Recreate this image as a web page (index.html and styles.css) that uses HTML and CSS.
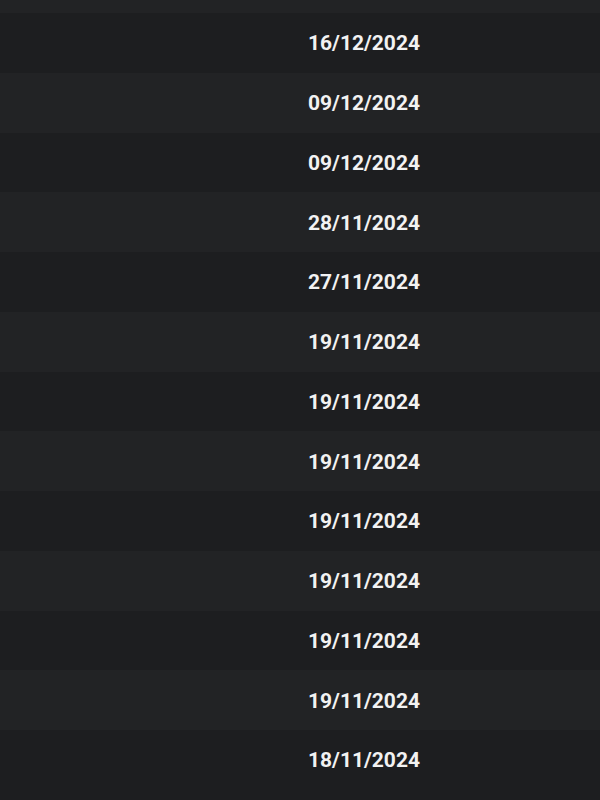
FILE: index.html
```html
<!DOCTYPE html>
<html>
<head>
<meta charset="utf-8">
<link rel="stylesheet" href="styles.css">
</head>
<body>
<div class="table">
  <div class="row light top"></div>
  <div class="row dark"><span class="date">16/12/2024</span></div>
  <div class="row light"><span class="date">09/12/2024</span></div>
  <div class="row dark"><span class="date">09/12/2024</span></div>
  <div class="row light"><span class="date">28/11/2024</span></div>
  <div class="row dark"><span class="date">27/11/2024</span></div>
  <div class="row light"><span class="date">19/11/2024</span></div>
  <div class="row dark"><span class="date">19/11/2024</span></div>
  <div class="row light"><span class="date">19/11/2024</span></div>
  <div class="row dark"><span class="date">19/11/2024</span></div>
  <div class="row light"><span class="date">19/11/2024</span></div>
  <div class="row dark"><span class="date">19/11/2024</span></div>
  <div class="row light"><span class="date">19/11/2024</span></div>
  <div class="row dark"><span class="date">18/11/2024</span></div>
</div>
</body>
</html>
```
FILE: styles.css
```css
html, body {
  margin: 0;
  padding: 0;
  background: #1d1e20;
}
body {
  width: 600px;
  height: 800px;
  overflow: hidden;
  font-family: Roboto, "Liberation Sans", sans-serif;
}
.table {
  display: flex;
  flex-direction: column;
}
.row {
  height: 59.75px;
  flex: none;
  display: flex;
  align-items: center;
  justify-content: center;
  padding-left: 128px;
  padding-top: 2px;
  box-sizing: border-box;
}
.row.top {
  height: 13px;
}
.dark {
  background: #1d1e20;
}
.light {
  background: #222325;
}
.date {
  color: #f2f2f2;
  font-size: 21px;
  font-weight: 700;
  line-height: 1;
}
```
